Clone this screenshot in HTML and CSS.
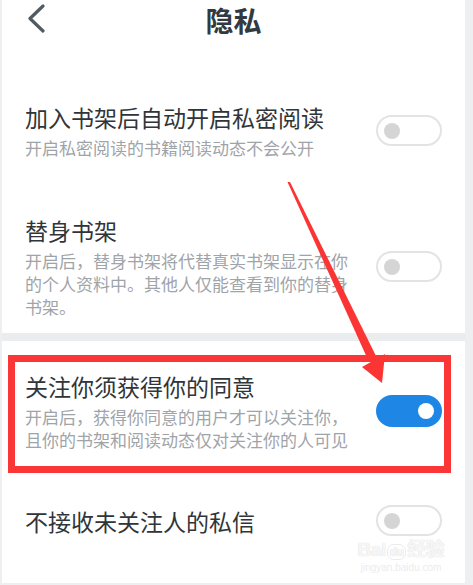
FILE: index.html
```html
<!DOCTYPE html>
<html lang="zh-CN">
<head>
<meta charset="utf-8">
<title>隐私</title>
<link rel="stylesheet" href="styles.css">
</head>
<body>
<div class="page">
  <section class="panel panel-top">
    <header class="topbar">
      <svg class="back" width="20" height="30" viewBox="0 0 20 30"><polyline points="17,3 4,15.5 17,28" fill="none" stroke="#525a62" stroke-width="3.2" stroke-linecap="round" stroke-linejoin="round"/></svg>
      <h1 class="title">隐私</h1>
    </header>
    <div class="list list-top">
      <div class="row">
        <div class="text">
          <div class="name">加入书架后自动开启私密阅读</div>
          <div class="desc">开启私密阅读的书籍阅读动态不会公开</div>
        </div>
        <span class="toggle"><span class="knob"></span></span>
      </div>
      <div class="row">
        <div class="text">
          <div class="name">替身书架</div>
          <div class="desc">开启后，替身书架将代替真实书架显示在你的个人资料中。其他人仅能查看到你的替身书架。</div>
        </div>
        <span class="toggle"><span class="knob"></span></span>
      </div>
    </div>
  </section>
  <div class="band"></div>
  <section class="panel panel-bottom">
    <div class="list list-bottom">
      <div class="row">
        <div class="text">
          <div class="name">关注你须获得你的同意</div>
          <div class="desc">开启后，获得你同意的用户才可以关注你，且你的书架和阅读动态仅对关注你的人可见</div>
        </div>
        <span class="toggle on"><span class="knob"></span></span>
      </div>
      <div class="row">
        <div class="text">
          <div class="name">不接收未关注人的私信</div>
        </div>
        <span class="toggle"><span class="knob"></span></span>
      </div>
    </div>
  </section>

  <div class="highlight"></div>
  <svg class="arrow" width="473" height="585" viewBox="0 0 473 585">
    <polygon points="287.5,182 290,182 377,358 369,362" fill="#fb3434"/>
    <polygon points="362,367 385,354 382,383" fill="#fb3434"/>
  </svg>
  <div class="watermark">
    <div class="wm-logo">Bai<span class="wm-du">du</span>经验</div>
    <div class="wm-url">jingyan.baidu.com</div>
  </div>
</div>
</body>
</html>
```

FILE: styles.css
```css
html, body {
  margin: 0;
  padding: 0;
}
body {
  background: #eeeff0;
  font-family: "Noto Sans CJK SC", "Noto Sans", sans-serif;
  width: 473px;
  height: 585px;
  overflow: hidden;
}
.page {
  position: relative;
  width: 473px;
  height: 585px;
}
.panel {
  background: #fff;
  margin-left: 2px;
  width: 463px;
}
.panel-bottom {
  height: 242px;
}
.band {
  height: 8px;
  margin-left: 2px;
  width: 463px;
  background: #eaecee;
}
.topbar {
  position: relative;
  height: 40px;
  display: flex;
  align-items: center;
  justify-content: center;
}
.back {
  position: absolute;
  left: 24px;
  top: 3px;
}
.title {
  margin: 0;
  font-size: 28px;
  line-height: 40px;
  font-weight: 700;
  color: #323940;
}
.list {
  display: flex;
  flex-direction: column;
  padding: 0 23px;
}
.list-top {
  padding-top: 62px;
  padding-bottom: 15px;
  gap: 56px;
}
.list-bottom {
  padding-top: 30px;
  gap: 54px;
}
.row {
  display: flex;
  align-items: center;
  gap: 20px;
}
.text {
  flex: 1;
  min-width: 0;
}
.name {
  font-size: 23px;
  line-height: 30px;
  color: #30353a;
}
.desc {
  margin-top: 4px;
  font-size: 17px;
  line-height: 23px;
  color: #9fa4a9;
}
.toggle {
  flex: none;
  box-sizing: border-box;
  width: 66px;
  height: 31px;
  border: 2px solid #e3e3e3;
  border-radius: 16px;
  background: #fff;
  display: flex;
  align-items: center;
  padding-left: 6px;
}
.knob {
  width: 16px;
  height: 16px;
  border-radius: 50%;
  background: #d5d5d5;
}
.toggle.on {
  height: 32px;
  border-color: #1e87e6;
  background: #1e87e6;
  justify-content: flex-end;
  padding-left: 0;
  padding-right: 6px;
}
.toggle.on .knob {
  background: #fff;
}
.highlight {
  position: absolute;
  left: 8px;
  top: 355px;
  width: 443px;
  height: 118px;
  box-sizing: border-box;
  border: 7px solid #fb3636;
}
.arrow {
  position: absolute;
  left: 0;
  top: 0;
  pointer-events: none;
}
.watermark {
  position: absolute;
  left: 355px;
  top: 538px;
  width: 92px;
  text-align: center;
  color: #f6f6f6;
  font-family: "Liberation Sans", "Noto Sans CJK SC", sans-serif;
}
.wm-logo {
  font-size: 19px;
  font-weight: 700;
  line-height: 24px;
  letter-spacing: -0.5px;
  text-shadow: 0 0 1px #e2e2e2, 0 0 1px #e2e2e2;
}
.wm-du {
  display: inline-block;
  font-size: 12px;
  line-height: 14px;
  padding: 0 2px;
  margin: 0 1px;
  border: 1.5px solid #ebebeb;
  border-radius: 7px;
}
.wm-url {
  font-size: 10px;
  line-height: 12px;
  color: #ececec;
}
```
